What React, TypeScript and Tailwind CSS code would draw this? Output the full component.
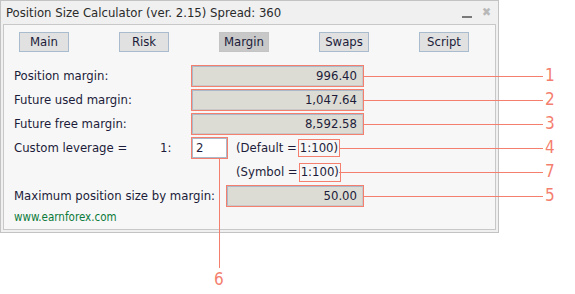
import React from "react";

const FONT = { fontFamily: '"DejaVu Sans Condensed", "DejaVu Sans", sans-serif' };

function Field({ value, w }: { value: string; w: string }) {
  return (
    <div className={`${w} h-[22px] border border-[#f47f6f] flex`}>
      <div className="flex-1 border border-[#a9b9c9] border-r-[#c9c9c9] border-b-[#c9c9c9] bg-[#dcdcd4] flex items-center justify-end pr-[5px] text-[13px] text-[#1c1c3a]">
        {value}
      </div>
    </div>
  );
}

function Btn({ label, active }: { label: string; active?: boolean }) {
  return (
    <div
      className={`w-[50px] h-[20px] flex items-center justify-center text-[13px] text-[#1c1c3a] border ${
        active ? "bg-[#c8c8c8] border-[#c4c4c4]" : "bg-[#e1e1e1] border-[#a9bccd]"
      }`}
    >
      {label}
    </div>
  );
}

export default function App() {
  const lines = [
    { y: 76, x: 363, n: "1" },
    { y: 100, x: 363, n: "2" },
    { y: 124, x: 363, n: "3" },
    { y: 148, x: 339, n: "4" },
    { y: 172, x: 339, n: "7" },
    { y: 196, x: 363, n: "5" },
  ];
  return (
    <div className="relative w-[575px] h-[294px] bg-white" style={FONT}>
      <div className="w-[499px] h-[233px] border border-[#c3c3c3] bg-[#f0f0f0] flex flex-col">
        <div className="h-[23px] flex items-center pl-[5px] pr-[6px] text-[13px] text-[#2a2a2a]">
          <span className="flex-1">Position Size Calculator (ver. 2.15) Spread: 360</span>
          <span className="w-[10px] h-[2px] bg-[#7a7a7a] mt-[8px] mr-[10px]" />
          <span className="text-[12px] text-[#b8b8b8] leading-none mr-[1px] mt-[-2px]">✖</span>
        </div>
        <div className="flex-1 mx-[2px] mb-[2px] border border-[#c8c8c8] bg-[#f7f7f7] flex flex-col">
          <div className="pt-[7px] pl-[15px] grid grid-cols-[repeat(5,100px)]">
            <Btn label="Main" />
            <Btn label="Risk" />
            <Btn label="Margin" active />
            <Btn label="Swaps" />
            <Btn label="Script" />
          </div>
          <div className="mt-[12px] pl-[10px] flex flex-col text-[13px] text-[#1c1c3a]">
            <div className="h-[24px] flex items-center">
              <span className="w-[177px]">Position margin:</span>
              <Field value="996.40" w="w-[173px]" />
            </div>
            <div className="h-[24px] flex items-center">
              <span className="w-[177px]">Future used margin:</span>
              <Field value="1,047.64" w="w-[173px]" />
            </div>
            <div className="h-[24px] flex items-center">
              <span className="w-[177px]">Future free margin:</span>
              <Field value="8,592.58" w="w-[173px]" />
            </div>
            <div className="h-[24px] flex items-center">
              <span className="w-[146px]">Custom leverage =</span>
              <span className="w-[31px]">1:</span>
              <div className="w-[37px] h-[22px] border border-[#f47f6f] flex">
                <div className="flex-1 border border-[#a9b9c9] bg-white flex items-center pl-[3px]">2</div>
              </div>
              <span className="ml-[8px]">(Default =</span>
              <span className="ml-[1px] px-[1px] h-[18px] border border-[#f47f6f] flex items-center">1:100)</span>
            </div>
            <div className="h-[24px] flex items-center">
              <span className="ml-[222px]">(Symbol =</span>
              <span className="ml-[1px] px-[1px] h-[19px] border border-[#f47f6f] flex items-center">1:100)</span>
            </div>
            <div className="h-[24px] flex items-center">
              <span className="w-[212px]">Maximum position size by margin:</span>
              <Field value="50.00" w="w-[138px]" />
            </div>
            <div className="h-[20px] flex items-center text-[11.5px] text-[#0a7a3a]">www.earnforex.com</div>
          </div>
        </div>
      </div>

      {lines.map((l) => (
        <React.Fragment key={l.n}>
          <div className="absolute h-px bg-[#f47f6f]" style={{ top: l.y, left: l.x, width: 543 - l.x }} />
          <div
            className="absolute text-[17px] leading-none text-[#f47f6f]"
            style={{ top: l.y - 9, left: 545 }}
          >
            {l.n}
          </div>
        </React.Fragment>
      ))}
      <div className="absolute w-px bg-[#f47f6f]" style={{ left: 219, top: 158, height: 110 }} />
      <div className="absolute text-[17px] leading-none text-[#f47f6f]" style={{ left: 214, top: 271 }}>
        6
      </div>
    </div>
  );
}
